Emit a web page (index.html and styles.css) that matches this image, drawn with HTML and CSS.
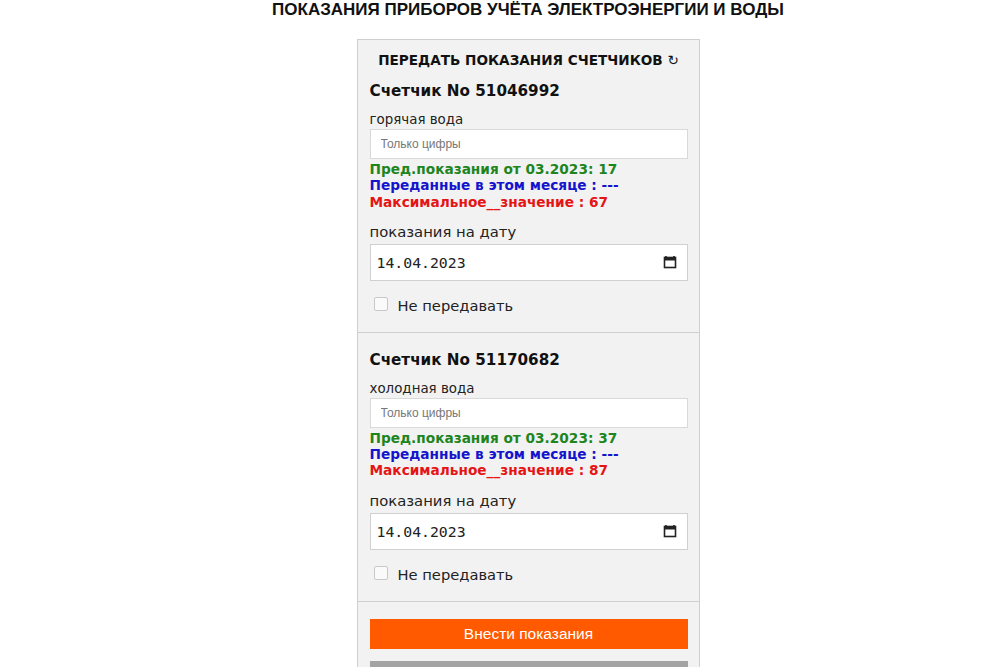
FILE: index.html
```html
<!DOCTYPE html>
<html lang="ru">
<head>
<meta charset="UTF-8">
<meta name="viewport" content="width=device-width, initial-scale=1.0">
<title>Показания приборов учёта</title>
<link rel="stylesheet" href="styles.css">
</head>
<body>
<div class="page">
<h1 class="title">ПОКАЗАНИЯ ПРИБОРОВ УЧЁТА ЭЛЕКТРОЭНЕРГИИ И ВОДЫ</h1>
<form class="panel">
    <div class="section">
        <div class="panel-head">ПЕРЕДАТЬ ПОКАЗАНИЯ СЧЕТЧИКОВ <span class="reload">↻</span></div>
        <div class="meter-name">Счетчик No 51046992</div>
        <label class="field-label">горячая вода</label>
        <input class="reading" type="text" placeholder="Только цифры">
        <div class="info">
            <div class="prev">Пред.показания от 03.2023: 17</div>
            <div class="sent">Переданные в этом месяце : ---</div>
            <div class="max">Максимальное__значение : 67</div>
        </div>
        <label class="date-label">показания на дату</label>
        <div class="date-box">
            <span>14.04.2023</span>
            <svg width="14" height="14" viewBox="0 0 14 14"><path d="M3 1v2M11 1v2" stroke="#222" stroke-width="1.6"/><rect x="1.5" y="2.5" width="11" height="10" fill="none" stroke="#222" stroke-width="1.6"/><rect x="1.5" y="2.5" width="11" height="3" fill="#222"/></svg>
        </div>
        <label class="skip"><span class="check"></span>Не передавать</label>
    </div>
    <div class="section">
        <div class="meter-name">Счетчик No 51170682</div>
        <label class="field-label">холодная вода</label>
        <input class="reading" type="text" placeholder="Только цифры">
        <div class="info">
            <div class="prev">Пред.показания от 03.2023: 37</div>
            <div class="sent">Переданные в этом месяце : ---</div>
            <div class="max">Максимальное__значение : 87</div>
        </div>
        <label class="date-label">показания на дату</label>
        <div class="date-box">
            <span>14.04.2023</span>
            <svg width="14" height="14" viewBox="0 0 14 14"><path d="M3 1v2M11 1v2" stroke="#222" stroke-width="1.6"/><rect x="1.5" y="2.5" width="11" height="10" fill="none" stroke="#222" stroke-width="1.6"/><rect x="1.5" y="2.5" width="11" height="3" fill="#222"/></svg>
        </div>
        <label class="skip"><span class="check"></span>Не передавать</label>
    </div>
    <div class="actions">
        <button type="button" class="btn-submit">Внести показания</button>
        <button type="button" class="btn-back" aria-label="Назад"></button>
    </div>
</form>
</div>
</body>
</html>
```

FILE: styles.css
```css
body {
    margin: 0;
    background: #fff;
    color: #111;
    font-family: "DejaVu Sans", Verdana, sans-serif;
    overflow: hidden;
}

.page {
    display: flex;
    flex-direction: column;
    align-items: center;
    padding-left: 56px;
}

.title {
    margin: 0;
    font-family: "Liberation Sans", Arial, sans-serif;
    font-size: 17px;
    line-height: 20px;
    font-weight: bold;
    color: #111;
}

.panel {
    margin-top: 19px;
    width: 341px;
    background: #f2f2f2;
    border: 1px solid #cfcfcf;
}

.section {
    display: flex;
    flex-direction: column;
    padding: 17px 11px 16px 12px;
    border-bottom: 1px solid #cfcfcf;
}

.panel-head {
    margin-top: -5px;
    text-align: center;
    font-size: 13.6px;
    line-height: 17px;
    font-weight: bold;
    margin-bottom: 12px;
}

.reload {
    font-weight: normal;
}

.meter-name {
    font-size: 15.2px;
    line-height: 20px;
    font-weight: bold;
}

.field-label {
    margin-top: 11px;
    font-size: 13.4px;
    line-height: 16px;
    color: #222;
}

.reading {
    margin-top: 1px;
    height: 30px;
    box-sizing: border-box;
    padding: 0 10px;
    border: 1px solid #d9d9d9;
    background: #fff;
    font-family: "Liberation Sans", Arial, sans-serif;
    font-size: 12px;
}

.reading::placeholder {
    color: #777;
}

.info {
    margin-top: 2px;
    font-size: 13.7px;
    line-height: 16.3px;
    font-weight: bold;
}

.prev { color: #1e851e; }
.sent { color: #1414cc; }
.max { color: #e51515; }

.date-label {
    margin-top: 13px;
    font-size: 14.8px;
    line-height: 18px;
    color: #222;
}

.date-box {
    margin-top: 3px;
    height: 37px;
    box-sizing: border-box;
    display: flex;
    align-items: center;
    justify-content: space-between;
    padding: 0 10px 0 6px;
    border: 1px solid #d0d0d0;
    background: #fff;
    font-family: "DejaVu Sans Mono", monospace;
    font-size: 14.8px;
    color: #222;
}

.skip {
    margin-top: 15px;
    height: 20px;
    display: flex;
    align-items: center;
    font-size: 14.7px;
    color: #222;
}

.check {
    width: 12px;
    height: 12px;
    margin: -3px 10px 0 4px;
    border: 1px solid #c8c8c8;
    border-radius: 2px;
    background: #fafafa;
}

.actions {
    display: flex;
    flex-direction: column;
    gap: 12px;
    padding: 17px 11px 16px 12px;
}

.actions button {
    height: 30px;
    border: none;
    font-family: "Liberation Sans", Arial, sans-serif;
    font-size: 15.5px;
    color: #fff;
}

.btn-submit {
    background: #ff5a00;
}

.btn-back {
    background: #a3a3a3;
}
```
